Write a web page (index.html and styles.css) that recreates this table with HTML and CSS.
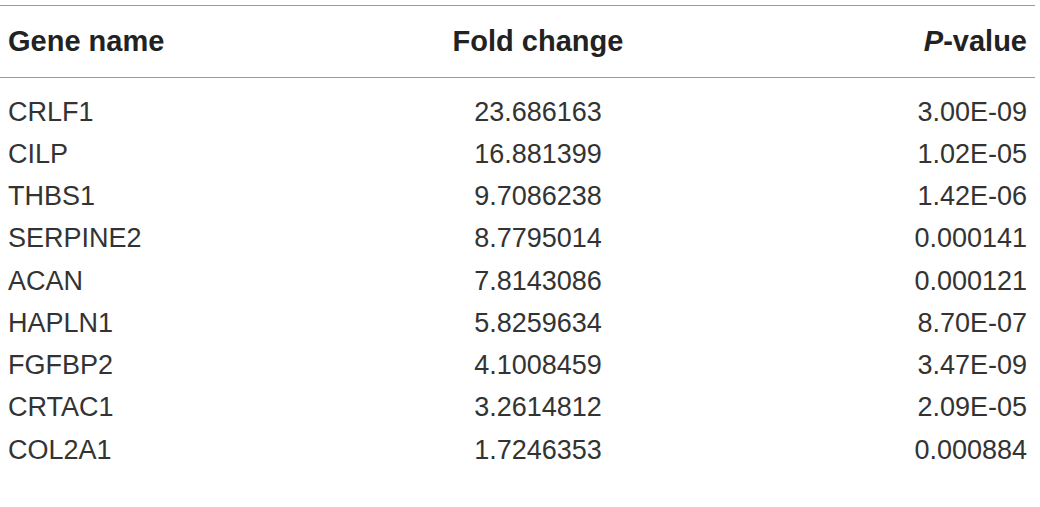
FILE: index.html
```html
<!DOCTYPE html>
<html lang="en">
<head>
<meta charset="UTF-8">
<title>Genes</title>
<link rel="stylesheet" href="styles.css">
</head>
<body>
<table class="gene-table">
    <colgroup>
        <col class="col-name">
        <col class="col-fold">
        <col class="col-p">
    </colgroup>
    <thead>
        <tr>
            <th class="name">Gene name</th>
            <th class="fold">Fold change</th>
            <th class="pval"><i>P</i>-value</th>
        </tr>
    </thead>
    <tbody>
        <tr><td class="name">CRLF1</td><td class="fold">23.686163</td><td class="pval">3.00E-09</td></tr>
        <tr><td class="name">CILP</td><td class="fold">16.881399</td><td class="pval">1.02E-05</td></tr>
        <tr><td class="name">THBS1</td><td class="fold">9.7086238</td><td class="pval">1.42E-06</td></tr>
        <tr><td class="name">SERPINE2</td><td class="fold">8.7795014</td><td class="pval">0.000141</td></tr>
        <tr><td class="name">ACAN</td><td class="fold">7.8143086</td><td class="pval">0.000121</td></tr>
        <tr><td class="name">HAPLN1</td><td class="fold">5.8259634</td><td class="pval">8.70E-07</td></tr>
        <tr><td class="name">FGFBP2</td><td class="fold">4.1008459</td><td class="pval">3.47E-09</td></tr>
        <tr><td class="name">CRTAC1</td><td class="fold">3.2614812</td><td class="pval">2.09E-05</td></tr>
        <tr><td class="name">COL2A1</td><td class="fold">1.7246353</td><td class="pval">0.000884</td></tr>
    </tbody>
</table>
</body>
</html>
```

FILE: styles.css
```css
/* Tabla de genes */
body {
    margin: 0;
    padding-top: 5px;
    background-color: #fff;
    font-family: "Liberation Sans", Arial, sans-serif;
    color: #333;
}

.gene-table {
    width: 1035px;
    border-collapse: collapse;
    table-layout: fixed;
}

.col-name {
    width: 360px;
}

.col-fold {
    width: 356px;
}

.gene-table thead tr {
    border-top: 1px solid #9a9a9a;
    border-bottom: 1px solid #9a9a9a;
}

.gene-table th {
    height: 71px;
    padding: 0 8px;
    font-size: 29px;
    font-weight: bold;
    color: #222;
    vertical-align: middle;
}

.gene-table td {
    height: 42.25px;
    padding: 0 8px;
    font-size: 27px;
    vertical-align: middle;
    white-space: nowrap;
}

.gene-table tbody tr:first-child td {
    padding-top: 13px;
}

.name {
    text-align: left;
}

.fold {
    text-align: center;
}

.pval {
    text-align: right;
}
```
